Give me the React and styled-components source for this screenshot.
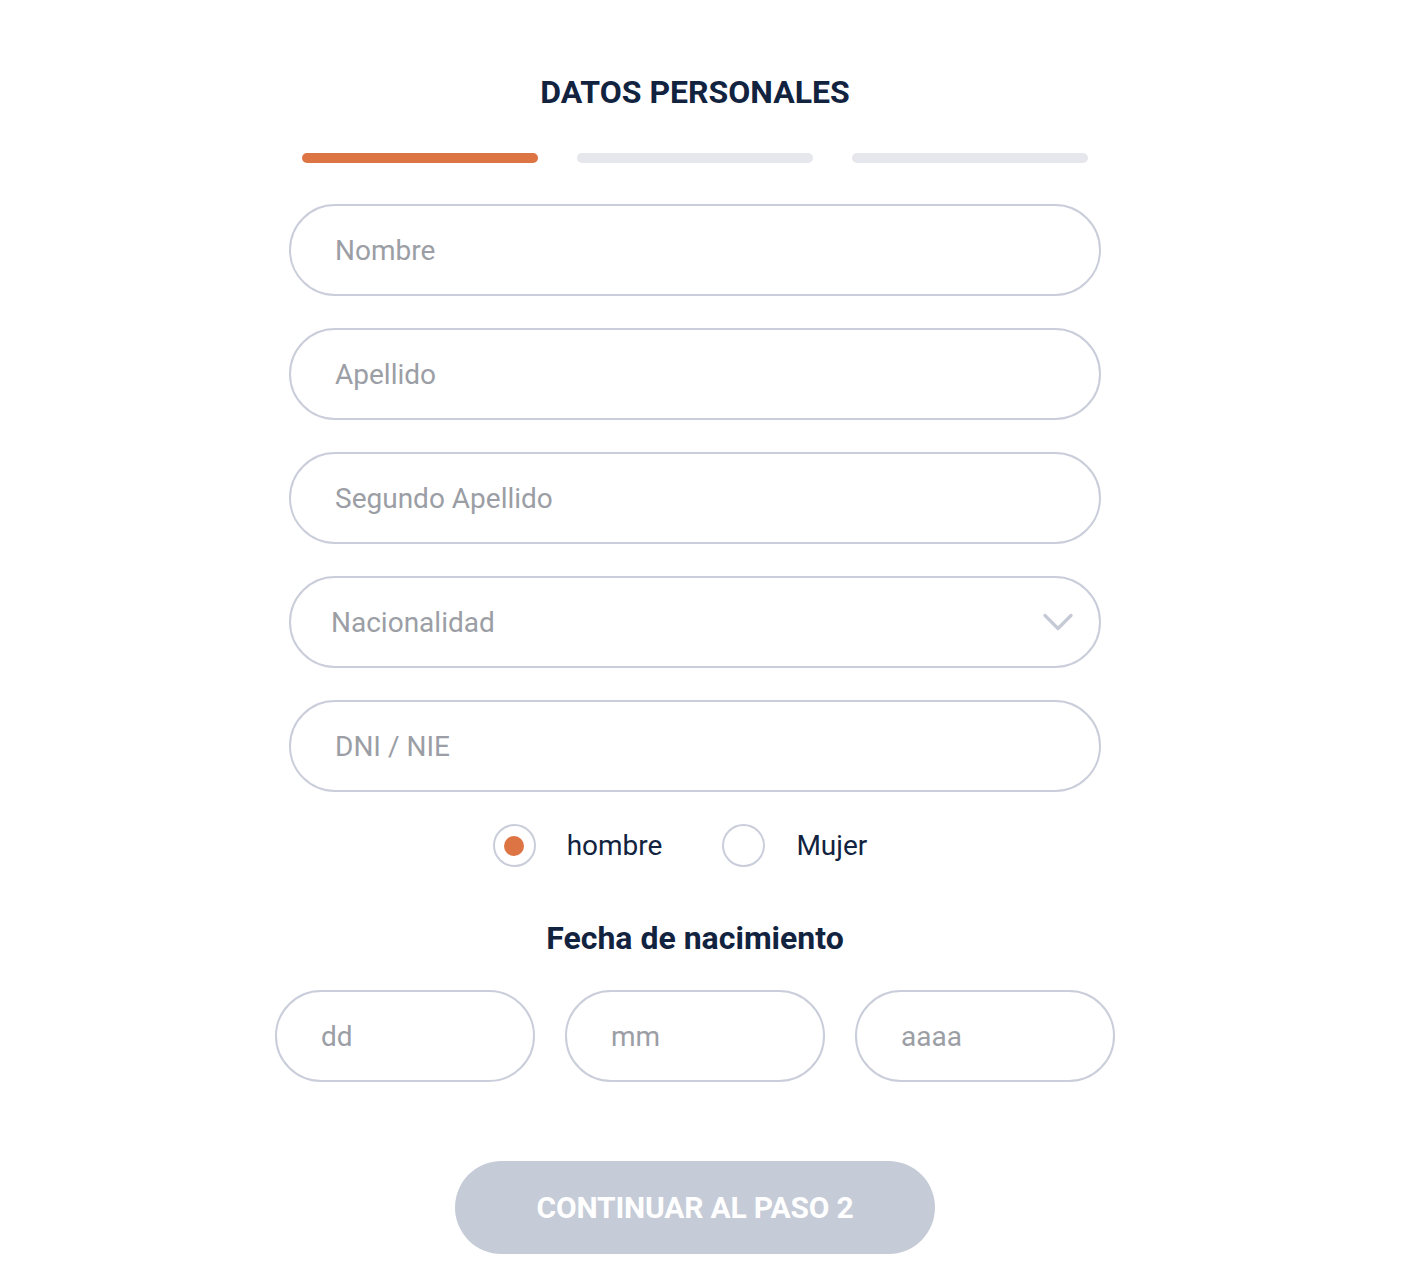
import React from 'react'
import styled, { createGlobalStyle } from 'styled-components'

const GlobalStyle = createGlobalStyle`
  * { box-sizing: border-box; }
  body {
    margin: 0;
    background: #fff;
    font-family: Roboto, "Liberation Sans", Arial, sans-serif;
  }
`

const Page = styled.div`
  width: 100%;
  padding: 73px 14px 24px 0;
  display: flex;
  justify-content: center;
`

const Form = styled.form`
  width: 840px;
  display: flex;
  flex-direction: column;
  align-items: center;
`

const Title = styled.h1`
  margin: 0;
  font-size: 32px;
  line-height: 38px;
  font-weight: 700;
  color: #12233f;
`

const Steps = styled.div`
  margin-top: 42px;
  width: 786px;
  display: grid;
  grid-template-columns: repeat(3, 1fr);
  gap: 39px;
`

const Step = styled.div`
  height: 10px;
  border-radius: 5px;
  background: ${p => (p.active ? '#dd7444' : '#e6e7ec')};
`

const Fields = styled.div`
  margin-top: 41px;
  width: 812px;
  display: flex;
  flex-direction: column;
  gap: 32px;
`

const Input = styled.input`
  width: 100%;
  height: 92px;
  border: 2px solid #cacedb;
  border-radius: 46px;
  padding: 0 44px;
  font-family: inherit;
  font-size: 28px;
  color: #12233f;
  background: #fff;
  outline: none;

  &::placeholder {
    color: #9b9ea5;
  }
`

const SelectWrap = styled.div`
  position: relative;
`

const Select = styled.select`
  width: 100%;
  height: 92px;
  border: 2px solid #cacedb;
  border-radius: 46px;
  padding: 0 40px;
  font-family: inherit;
  font-size: 28px;
  color: #9b9ea5;
  background: #fff;
  appearance: none;
  outline: none;
`

const Chevron = styled.svg`
  position: absolute;
  right: 28px;
  top: 37px;
  pointer-events: none;
`

const Gender = styled.div`
  margin-top: 32px;
  padding-right: 30px;
  display: flex;
  align-items: center;
  gap: 60px;
`

const RadioLabel = styled.label`
  display: flex;
  align-items: center;
  gap: 31px;
  font-size: 28px;
  color: #12233f;
  cursor: pointer;

  input {
    display: none;
  }
`

const RadioCircle = styled.span`
  width: 43px;
  height: 43px;
  border-radius: 50%;
  border: 2px solid #cacedb;
  display: flex;
  align-items: center;
  justify-content: center;

  &::after {
    content: '';
    width: 20px;
    height: 20px;
    border-radius: 50%;
    background: ${p => (p.checked ? '#dd7444' : 'transparent')};
  }
`

const Subtitle = styled.h2`
  margin: 53px 0 0;
  font-size: 32px;
  line-height: 36px;
  font-weight: 700;
  color: #12233f;
`

const DateRow = styled.div`
  margin-top: 34px;
  width: 840px;
  display: grid;
  grid-template-columns: repeat(3, 1fr);
  gap: 30px;
`

const Submit = styled.button`
  margin-top: 79px;
  width: 480px;
  height: 93px;
  border: none;
  border-radius: 47px;
  background: #c5cbd7;
  color: #fff;
  font-family: inherit;
  font-size: 30px;
  font-weight: 700;
  letter-spacing: -0.2px;
`

export default function App() {
  const [gender, setGender] = React.useState('hombre')

  return (
    <>
      <GlobalStyle />
      <Page>
        <Form onSubmit={e => e.preventDefault()}>
          <Title>DATOS PERSONALES</Title>
          <Steps>
            <Step active />
            <Step />
            <Step />
          </Steps>

          <Fields>
            <Input placeholder="Nombre" />
            <Input placeholder="Apellido" />
            <Input placeholder="Segundo Apellido" />
            <SelectWrap>
              <Select defaultValue="">
                <option value="" disabled>Nacionalidad</option>
                <option value="es">Española</option>
              </Select>
              <Chevron width="30" height="18" viewBox="0 0 30 18" fill="none">
                <path d="M2 2.5l13 13 13-13" stroke="#c5cad6" strokeWidth="3.2" strokeLinecap="round" strokeLinejoin="round" />
              </Chevron>
            </SelectWrap>
            <Input placeholder="DNI / NIE" />
          </Fields>

          <Gender>
            {['hombre', 'Mujer'].map(g => (
              <RadioLabel key={g}>
                <input type="radio" name="gender" checked={gender === g} onChange={() => setGender(g)} />
                <RadioCircle checked={gender === g} />
                {g}
              </RadioLabel>
            ))}
          </Gender>

          <Subtitle>Fecha de nacimiento</Subtitle>
          <DateRow>
            <Input placeholder="dd" />
            <Input placeholder="mm" />
            <Input placeholder="aaaa" />
          </DateRow>

          <Submit type="submit">CONTINUAR AL PASO 2</Submit>
        </Form>
      </Page>
    </>
  )
}
